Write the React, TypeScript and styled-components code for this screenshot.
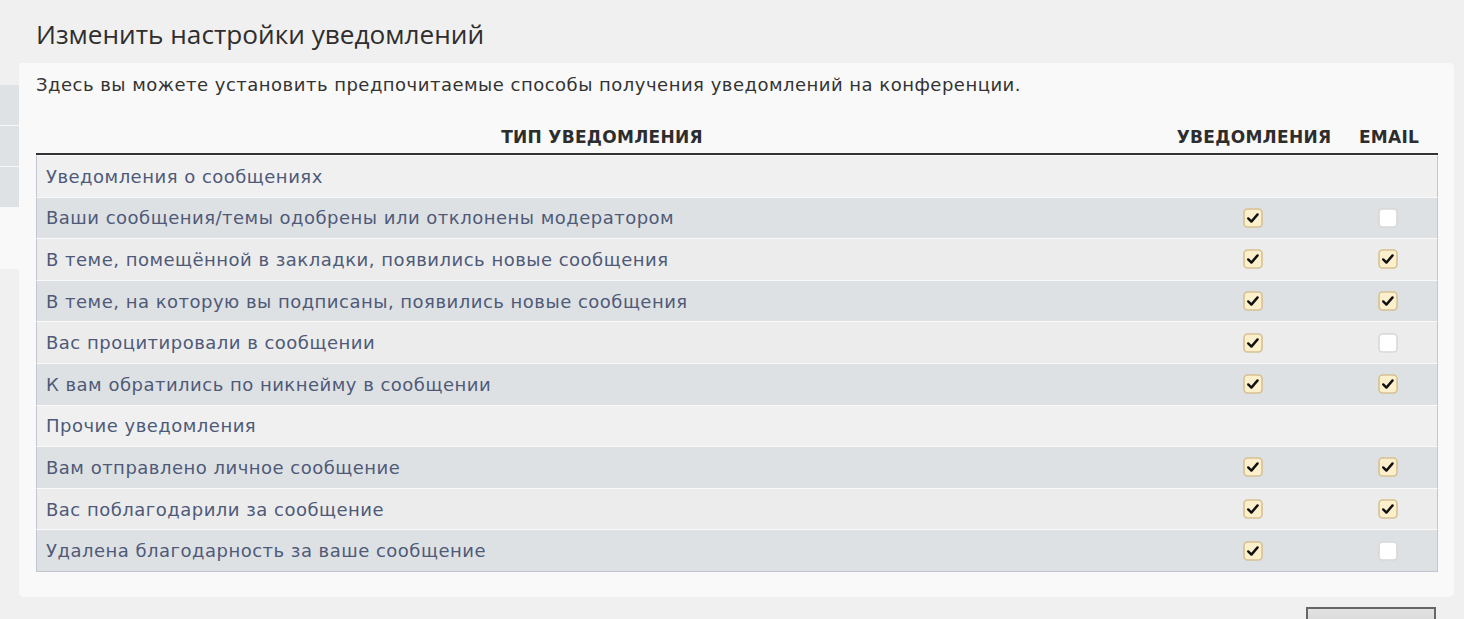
import React from "react";
import styled, { createGlobalStyle } from "styled-components";

const GlobalStyle = createGlobalStyle`
  html, body { margin: 0; padding: 0; background: #f0f0f0; }
  body { font-family: "DejaVu Sans", Verdana, sans-serif; color: #333; }
`;

const Page = styled.div`
  display: flex;
  flex-direction: column;
  width: 1464px;
`;

const Title = styled.h2`
  margin: 0;
  padding: 18px 0 0 36px;
  height: 63px;
  box-sizing: border-box;
  font-family: "Open Sans", "DejaVu Sans", sans-serif;
  font-weight: 400;
  font-size: 26.2px;
  line-height: 32px;
  color: #2e2e2e;
`;

const Main = styled.div`
  display: flex;
  align-items: flex-start;
`;

const Sidebar = styled.ul`
  list-style: none;
  margin: 22px 0 0 0;
  padding: 0;
  width: 19px;
  flex: none;
  display: flex;
  flex-direction: column;
`;

const Tab = styled.li<{ $active?: boolean }>`
  height: ${(p) => (p.$active ? 61 : 40)}px;
  background: ${(p) => (p.$active ? "#f9f9f9" : "#dfe2e5")};
  border-bottom: ${(p) => (p.$active ? "0" : "2px solid #f7f7f7")};
  margin-bottom: ${(p) => (p.$active ? 0 : -1)}px;
`;

const Panel = styled.section`
  flex: 1;
  margin-right: 10px;
  background: #f9f9f9;
  border-radius: 0 5px 5px 5px;
  padding: 12px 16px 26px 17px;
  height: 534px;
  box-sizing: border-box;
`;

const Intro = styled.p`
  margin: 0 0 23px 0;
  font-size: 18px;
  letter-spacing: 0.49px;
  line-height: 20px;
  color: #333;
`;

const Table = styled.div`
  display: flex;
  flex-direction: column;
`;

const Cols = `
  display: grid;
  grid-template-columns: 1fr 172px 98px;
  align-items: center;
`;

const HeadRow = styled.div`
  ${Cols}
  height: 35px;
  box-sizing: content-box;
  border-bottom: 2px solid #333;
`;

const HeadCell = styled.div`
  text-align: center;
  font-weight: 700;
  font-size: 17px;
  letter-spacing: 0.28px;
  text-transform: uppercase;
  color: #2d2d2d;
  padding-top: 2px;
`;

const Row = styled.div<{ $tone: "group" | "dark" | "light"; $last?: boolean }>`
  ${Cols}
  height: 40.6px;
  box-sizing: content-box;
  border-top: 1px solid #f9f9f9;
  border-left: 1px solid #c2c6d3;
  border-right: 1px solid #c2c6d3;
  border-bottom: ${(p) => (p.$last ? "1px solid #c2c6d3" : "0")};
  background: ${(p) =>
    p.$tone === "dark" ? "#dee1e4" : p.$tone === "light" ? "#ececec" : "#f0f0f0"};
  &:first-of-type { border-top: 0; }
`;

const Label = styled.div`
  padding-left: 9px;
  font-size: 18px;
  letter-spacing: 0.49px;
  color: #4e5a78;
`;

const BoxCell = styled.div`
  display: flex;
  justify-content: center;
`;

const FooterBar = styled.div`
  display: flex;
  justify-content: flex-end;
  padding: 10px 28px 0 0;
`;

const Submit = styled.button`
  width: 130px;
  height: 34px;
  border: 2px solid #666;
  background: linear-gradient(#e2e2e2, #cfcfcf);
  font-family: "DejaVu Sans", sans-serif;
  font-size: 14px;
  color: #333;
`;

function Check({ on }: { on: boolean }) {
  return (
    <svg width="20" height="20" viewBox="0 0 20 20">
      <rect
        x="1"
        y="1"
        width="18"
        height="18"
        rx="3.5"
        fill={on ? "#fcefcb" : "#ffffff"}
        stroke={on ? "#d6c191" : "#d8d8d8"}
        strokeWidth="1.6"
      />
      {on && (
        <path
          d="M5.2 10.4 L8.4 13.6 L14.6 6.4"
          fill="none"
          stroke="#111"
          strokeWidth="2.4"
          strokeLinecap="round"
          strokeLinejoin="round"
        />
      )}
    </svg>
  );
}

type Item =
  | { kind: "group"; label: string }
  | { kind: "item"; label: string; n: boolean; e: boolean };

const items: Item[] = [
  { kind: "group", label: "Уведомления о сообщениях" },
  { kind: "item", label: "Ваши сообщения/темы одобрены или отклонены модератором", n: true, e: false },
  { kind: "item", label: "В теме, помещённой в закладки, появились новые сообщения", n: true, e: true },
  { kind: "item", label: "В теме, на которую вы подписаны, появились новые сообщения", n: true, e: true },
  { kind: "item", label: "Вас процитировали в сообщении", n: true, e: false },
  { kind: "item", label: "К вам обратились по никнейму в сообщении", n: true, e: true },
  { kind: "group", label: "Прочие уведомления" },
  { kind: "item", label: "Вам отправлено личное сообщение", n: true, e: true },
  { kind: "item", label: "Вас поблагодарили за сообщение", n: true, e: true },
  { kind: "item", label: "Удалена благодарность за ваше сообщение", n: true, e: false },
];

export default function App() {
  let alt = 0;
  return (
    <>
      <GlobalStyle />
      <Page>
        <Title>Изменить настройки уведомлений</Title>
        <Main>
          <Sidebar>
            <Tab />
            <Tab />
            <Tab />
            <Tab $active />
          </Sidebar>
          <Panel>
            <Intro>
              Здесь вы можете установить предпочитаемые способы получения уведомлений на конференции.
            </Intro>
            <Table>
              <HeadRow>
                <HeadCell>Тип уведомления</HeadCell>
                <HeadCell>Уведомления</HeadCell>
                <HeadCell>Email</HeadCell>
              </HeadRow>
              {items.map((it, i) => {
                const last = i === items.length - 1;
                if (it.kind === "group") {
                  alt = 0;
                  return (
                    <Row key={i} $tone="group" $last={last}>
                      <Label>{it.label}</Label>
                      <div />
                      <div />
                    </Row>
                  );
                }
                const tone = alt % 2 === 0 ? "dark" : "light";
                alt++;
                return (
                  <Row key={i} $tone={tone} $last={last}>
                    <Label>{it.label}</Label>
                    <BoxCell>
                      <Check on={it.n} />
                    </BoxCell>
                    <BoxCell>
                      <Check on={it.e} />
                    </BoxCell>
                  </Row>
                );
              })}
            </Table>
          </Panel>
        </Main>
        <FooterBar>
          <Submit />
        </FooterBar>
      </Page>
    </>
  );
}
